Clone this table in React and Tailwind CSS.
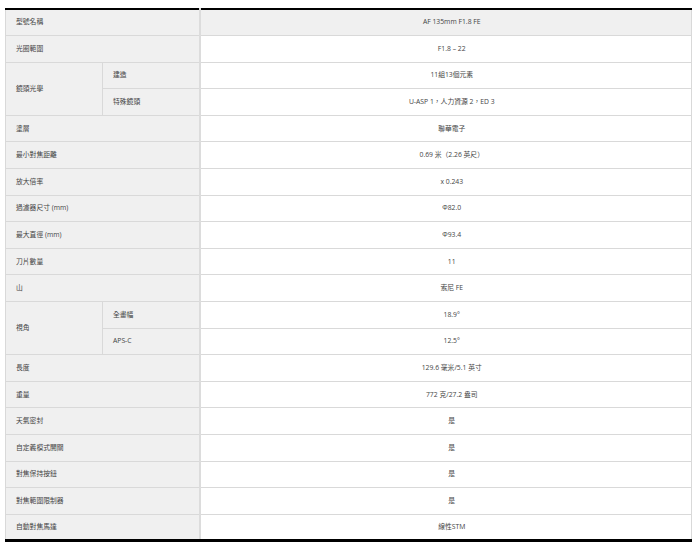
import React from 'react';

const rows = [
  { label: '型號名稱', value: 'AF 135mm F1.8 FE', head: true },
  { label: '光圈範圍', value: 'F1.8 – 22' },
  { label: '鏡頭光學', sub: [['建造', '11組13個元素'], ['特殊鏡頭', 'U-ASP 1，人力資源 2，ED 3']] },
  { label: '塗層', value: '聯華電子' },
  { label: '最小對焦距離', value: '0.69 米（2.26 英尺）' },
  { label: '放大倍率', value: 'x 0.243' },
  { label: '過濾器尺寸 (mm)', value: 'Φ82.0' },
  { label: '最大直徑 (mm)', value: 'Φ93.4' },
  { label: '刀片數量', value: '11' },
  { label: '山', value: '索尼 FE' },
  { label: '視角', sub: [['全畫幅', '18.9°'], ['APS-C', '12.5°']] },
  { label: '長度', value: '129.6 毫米/5.1 英寸' },
  { label: '重量', value: '772 克/27.2 盎司' },
  { label: '天氣密封', value: '是' },
  { label: '自定義模式開關', value: '是' },
  { label: '對焦保持按鈕', value: '是' },
  { label: '對焦範圍限制器', value: '是' },
  { label: '自動對焦馬達', value: '線性STM' },
];

const labelCell = 'bg-[#f0f0f0] border border-[#d9d9d9] pl-[10px] text-left align-middle';
const valueCell = 'border border-[#d9d9d9] border-l-2 border-l-[#dcdcdc] text-center align-middle pl-3';

export default function App() {
  return (
    <div className="bg-white w-[700px] h-[546px] pt-2 pl-[5px]" style={{ fontFamily: '"Open Sans", "Noto Sans CJK TC", sans-serif' }}>
      <table className="w-[687px] border-collapse table-fixed text-[6.8px] text-[#444] border-t-2 border-t-black border-b-[3px] border-b-black">
        <colgroup>
          <col className="w-[97px]" />
          <col className="w-[97px]" />
          <col />
        </colgroup>
        <tbody>
          {rows.map((row) => {
            if (row.sub) {
              return row.sub.map(([subLabel, val], i) => (
                <tr key={row.label + i} className="h-[26.6px]">
                  {i === 0 && (
                    <td rowSpan={2} className={labelCell}>{row.label}</td>
                  )}
                  <td className={labelCell}>{subLabel}</td>
                  <td className={valueCell}>{val}</td>
                </tr>
              ));
            }
            return (
              <tr key={row.label} className="h-[26.6px]">
                <td colSpan={2} className={labelCell}>{row.label}</td>
                <td className={valueCell + (row.head ? ' bg-[#f0f0f0]' : '')}>{row.value}</td>
              </tr>
            );
          })}
        </tbody>
      </table>
    </div>
  );
}
